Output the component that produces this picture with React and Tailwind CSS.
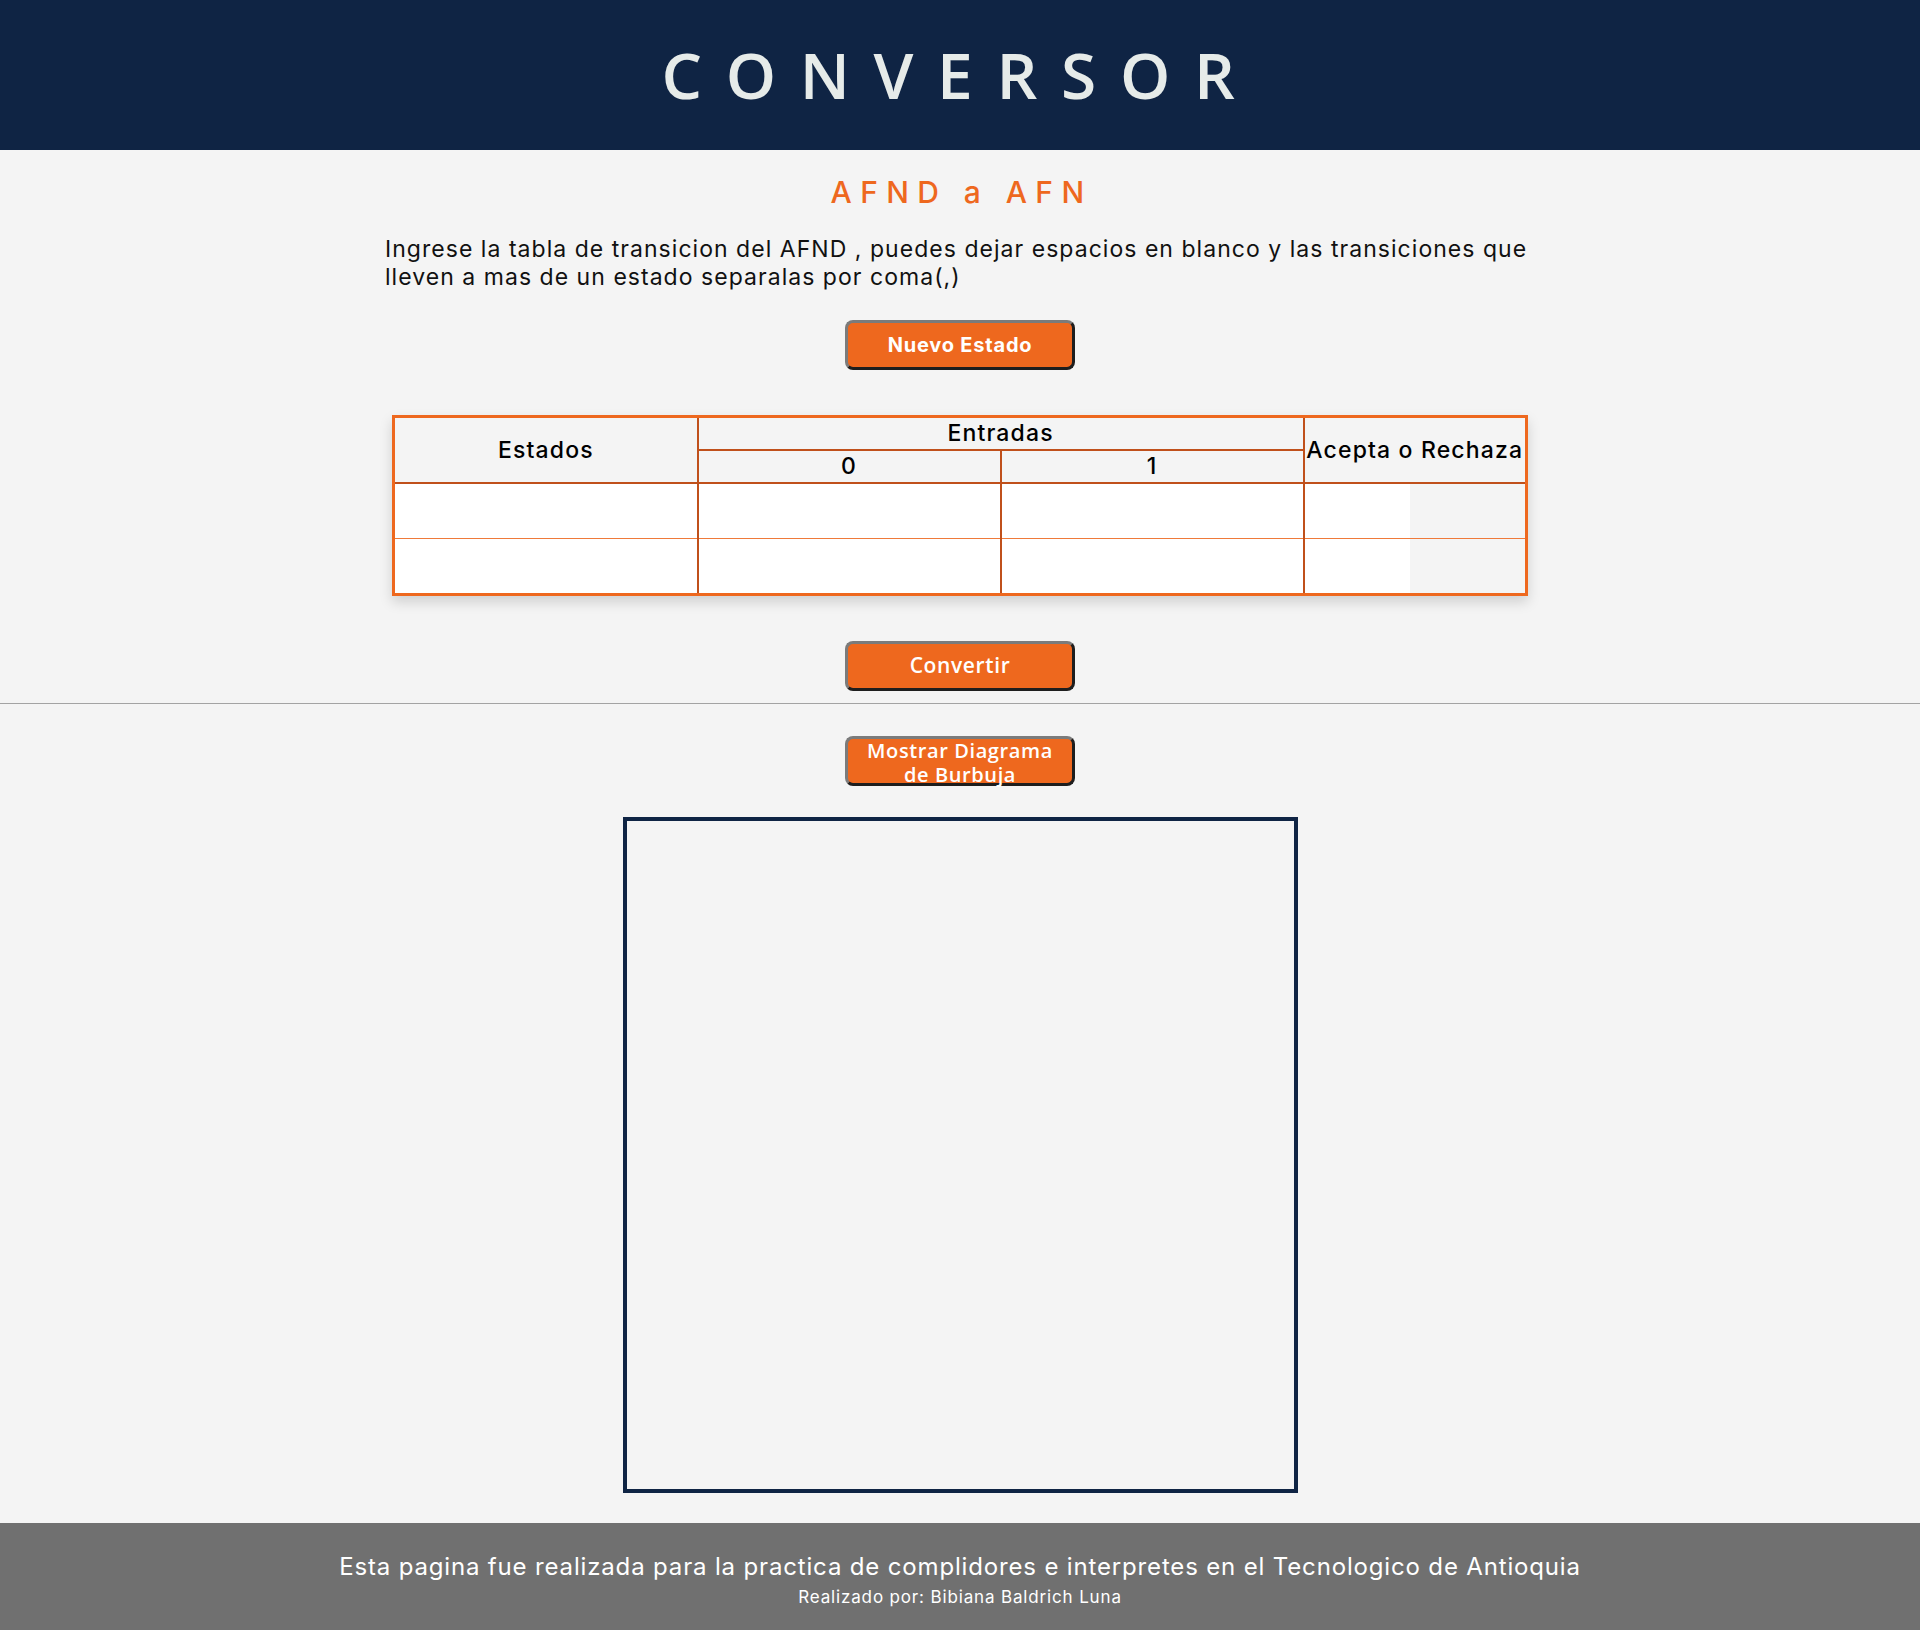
function OrangeButton({ children, className = "", font = "poppins" }) {
  return (
    <button
      className={`w-[230px] h-[50px] rounded-[8px] border-[3px] border-t-[#7b7b7b] border-l-[#7b7b7b] border-b-[#1e1e1e] border-r-[#1e1e1e] bg-[#ee681e] text-white ${
        font === "poppins"
          ? "font-['Inter','Noto_Sans',sans-serif] font-bold text-[20px] tracking-[0.04em]"
          : "font-['Open_Sans','Noto_Sans',sans-serif] font-semibold text-[21px] tracking-[0.03em]"
      } ${className}`}
    >
      {children}
    </button>
  );
}

export default function App() {
  const rows = [0, 1];
  const th = "font-medium border-2 border-[#c0501b] bg-[#f4f4f4]";
  const td = "p-0 border-x-2 border-x-[#c0501b] border-y border-y-[#ef7a3a]";

  return (
    <div className="min-h-screen bg-[#f4f4f4] flex flex-col font-['Inter','Noto_Sans',sans-serif]">
      <header className="h-[150px] bg-[#0f2444] flex items-center justify-center">
        <h1 className="text-[64px] font-semibold tracking-[0.37em] text-[#e6ebe9] font-['Open_Sans','Noto_Sans',sans-serif] leading-none">
          CONVERSOR
        </h1>
      </header>

      <main className="flex flex-col items-center">
        <section className="w-[1150px] flex flex-col items-center">
          <h2 className="mt-[18px] text-[30px] leading-[48px] font-medium tracking-[0.28em] pl-[0.1em] text-[#ee681e]">
            AFND a AFN
          </h2>
          <p className="mt-[19px] w-full text-[23px] leading-[28px] tracking-[0.045em] text-[#111]">
            Ingrese la tabla de transicion del AFND , puedes dejar espacios en blanco y las transiciones que
            lleven a mas de un estado separalas por coma(,)
          </p>

          <OrangeButton className="mt-[29px]">Nuevo Estado</OrangeButton>

          <table className="mt-[45px] w-[1136px] border-collapse border-[3px] border-[#ee681e] shadow-[0_6px_12px_rgba(0,0,0,0.15)] text-[23px] tracking-[0.05em] text-black">
            <thead>
              <tr className="h-[33px]">
                <th rowSpan={2} className={`w-[305px] ${th}`}>
                  Estados
                </th>
                <th colSpan={2} className={`${th} leading-[28px]`}>
                  Entradas
                </th>
                <th rowSpan={2} className={`w-[223px] whitespace-nowrap ${th}`}>
                  Acepta o Rechaza
                </th>
              </tr>
              <tr className="h-[33px]">
                <th className={`w-[304px] leading-[28px] ${th}`}>0</th>
                <th className={`w-[304px] leading-[28px] ${th}`}>1</th>
              </tr>
            </thead>
            <tbody>
              {rows.map((r) => (
                <tr key={r} className="h-[55px]">
                  <td className={`${td} bg-white`} />
                  <td className={`${td} bg-white`} />
                  <td className={`${td} bg-white`} />
                  <td className={`${td} bg-[#f4f4f4]`}>
                    <div className="h-[54px] w-[105px] bg-white" />
                  </td>
                </tr>
              ))}
            </tbody>
          </table>

          <OrangeButton className="mt-[45px]" font="montserrat">
            Convertir
          </OrangeButton>
        </section>

        <div className="mt-[12px] w-full h-px bg-[#a3a3a3]" />

        <OrangeButton className="mt-[32px] leading-[24px] !text-[20px] pb-[3px]" font="montserrat">
          Mostrar Diagrama
          <br />
          de Burbuja
        </OrangeButton>

        <div className="mt-[31px] w-[675px] h-[676px] border-4 border-[#0f2444] bg-[#f4f4f4]" />
      </main>

      <footer className="mt-[30px] flex-1 min-h-[108px] pt-[6px] bg-[#707070] flex flex-col items-center justify-center text-white">
        <p className="text-[24px] leading-[32px] tracking-[0.035em]">
          Esta pagina fue realizada para la practica de complidores e interpretes en el Tecnologico de Antioquia
        </p>
        <p className="mt-[2px] text-[17px] leading-[24px] tracking-[0.05em]">Realizado por: Bibiana Baldrich Luna</p>
      </footer>
    </div>
  );
}
